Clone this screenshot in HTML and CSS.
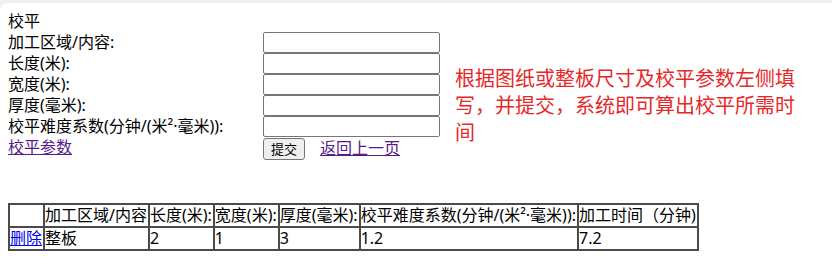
FILE: index.html
```html
<!DOCTYPE html>
<html lang="zh-CN">
<head>
    <meta charset="UTF-8">
    <title>校平</title>
    <link rel="stylesheet" href="styles.css">
</head>
<body>
    <div class="page">
        <div class="top">
            <form class="form">
                <div class="title">校平</div>
                <label for="area">加工区域/内容:</label>
                <input type="text" id="area">
                <label for="len">长度(米):</label>
                <input type="text" id="len">
                <label for="wid">宽度(米):</label>
                <input type="text" id="wid">
                <label for="thk">厚度(毫米):</label>
                <input type="text" id="thk">
                <label for="coef">校平难度系数(分钟/(米²·毫米)):</label>
                <input type="text" id="coef">
                <a href="#" class="visited">校平参数</a>
                <div class="actions">
                    <button type="button">提交</button>
                    <a href="#" class="visited">返回上一页</a>
                </div>
            </form>

            <p class="note">根据图纸或整板尺寸及校平参数左侧填写，并提交，系统即可算出校平所需时间</p>
        </div>

        <table class="list">
            <thead>
                <tr>
                    <th></th>
                    <th>加工区域/内容</th>
                    <th>长度(米):</th>
                    <th>宽度(米):</th>
                    <th>厚度(毫米):</th>
                    <th>校平难度系数(分钟/(米²·毫米)):</th>
                    <th>加工时间（分钟)</th>
                </tr>
            </thead>
            <tbody>
                <tr>
                    <td><a href="#">删除</a></td>
                    <td>整板</td>
                    <td>2</td>
                    <td>1</td>
                    <td>3</td>
                    <td>1.2</td>
                    <td>7.2</td>
                </tr>
            </tbody>
        </table>
    </div>
</body>
</html>
```

FILE: styles.css
```css
* {
    box-sizing: border-box;
}

html, body {
    margin: 0;
    height: 100%;
}

body {
    background-color: #efefef;
    padding-top: 3px;
    font-family: "Noto Sans", "Noto Sans CJK SC", sans-serif;
    font-size: 16px;
    line-height: 21px;
    color: #000;
}

.page {
    background-color: #fff;
    border-top-left-radius: 8px;
    min-height: 100%;
    padding: 8px;
}

.top {
    display: flex;
    align-items: flex-start;
}

/* formulario em duas colunas */
.form {
    display: grid;
    grid-template-columns: 255px 177px;
    margin: 0;
}

.title {
    grid-column: 1 / 3;
}

.form input {
    width: 177px;
    height: 21px;
    margin: 0;
    padding: 1px 2px;
    border: 1px solid #767676;
    border-radius: 2px;
    font-size: 13px;
}

.actions {
    display: flex;
    align-items: center;
    gap: 15px;
}

.actions button {
    height: 22px;
    padding: 0 7px;
    margin-top: 1px;
    background-color: #efefef;
    border: 1px solid #767676;
    border-radius: 3px;
    font-family: inherit;
    font-size: 13px;
    line-height: 18px;
}

a {
    color: #0000ee;
}

a.visited {
    color: #551a8b;
}

.note {
    width: 352px;
    margin: 54px 0 0 15px;
    color: #e62828;
    font-size: 20px;
    line-height: 27px;
}

.list {
    margin-top: 43px;
    border-collapse: separate;
    border-spacing: 0;
    border: 1px solid #4a4a4a;
}

.list th,
.list td {
    padding: 0 1px 0 0;
    border: 1px solid #4a4a4a;
    font-weight: normal;
    text-align: left;
    white-space: nowrap;
}
```
